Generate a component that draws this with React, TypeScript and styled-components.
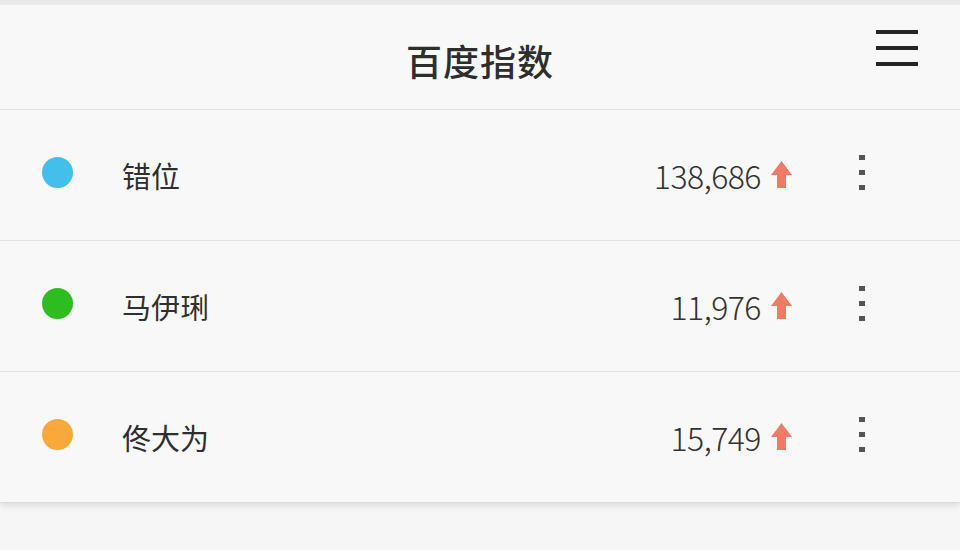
import styled, { createGlobalStyle } from 'styled-components'

const GlobalStyle = createGlobalStyle`
  html, body {
    margin: 0;
    padding: 0;
    background: #f6f6f6;
  }
  body {
    font-family: "Noto Sans CJK SC", "Noto Sans", sans-serif;
    color: #333;
  }
`

const Page = styled.div`
  width: 960px;
  height: 550px;
  overflow: hidden;
  padding-top: 5px;
  box-sizing: border-box;
  background: linear-gradient(#e6e6e6, #f6f6f6 9px);
`

const Card = styled.div`
  background: #f8f8f8;
  box-shadow: 0 3px 6px rgba(0, 0, 0, 0.1);
  border-bottom: 1px solid #dcdcdc;
`

const Header = styled.header`
  height: 104px;
  display: grid;
  grid-template-columns: 1fr auto 1fr;
  border-bottom: 1px solid #e3e3e3;
`

const Title = styled.h1`
  grid-column: 2;
  margin: 0;
  padding-top: 33px;
  font-size: 36px;
  font-weight: 500;
  line-height: 44px;
  color: #2e2e2e;
  letter-spacing: 1px;
`

const MenuButton = styled.div`
  grid-column: 3;
  justify-self: end;
  margin: 25px 42px 0 0;
  width: 42px;
  display: flex;
  flex-direction: column;
  gap: 12px;
`

const MenuLine = styled.span`
  display: block;
  height: 4px;
  background: #262626;
`

const Row = styled.div`
  height: 130px;
  display: flex;
  align-items: center;
  padding: 0 95px 0 42px;
  border-bottom: 1px solid #e3e3e3;

  &:last-child {
    border-bottom: none;
  }
`

const Dot = styled.span<{ color: string }>`
  width: 31px;
  height: 31px;
  border-radius: 50%;
  background: ${({ color }) => color};
  margin: -6px 49px 0 0;
  flex-shrink: 0;
`

const Name = styled.span`
  flex: 1;
  font-size: 29px;
  color: #2f2f2f;
`

const Value = styled.span`
  font-size: 32px;
  font-weight: 300;
  color: #333;
  letter-spacing: -0.5px;
`

const Arrow = styled.svg`
  width: 21px;
  height: 27px;
  margin-left: 10px;
  margin-top: -2px;
`

const More = styled.div`
  margin-left: 67px;
  display: flex;
  flex-direction: column;
  gap: 10px;
  margin-top: -6px;
`

const MoreDot = styled.span`
  width: 6px;
  height: 5px;
  background: #555;
`

const rows = [
  { name: '错位', value: '138,686', color: '#42bfea' },
  { name: '马伊琍', value: '11,976', color: '#2ebd1e' },
  { name: '佟大为', value: '15,749', color: '#f8a93a' },
]

export default function App() {
  return (
    <>
      <GlobalStyle />
      <Page>
        <Card>
          <Header>
            <Title>百度指数</Title>
            <MenuButton>
              <MenuLine />
              <MenuLine />
              <MenuLine />
            </MenuButton>
          </Header>
          {rows.map((r) => (
            <Row key={r.name}>
              <Dot color={r.color} />
              <Name>{r.name}</Name>
              <Value>{r.value}</Value>
              <Arrow viewBox="0 0 21 27">
                <path d="M10.5 0 L21 14 L15 14 L15 27 L6 27 L6 14 L0 14 Z" fill="#ee7b63" />
              </Arrow>
              <More>
                <MoreDot />
                <MoreDot />
                <MoreDot />
              </More>
            </Row>
          ))}
        </Card>
      </Page>
    </>
  )
}
